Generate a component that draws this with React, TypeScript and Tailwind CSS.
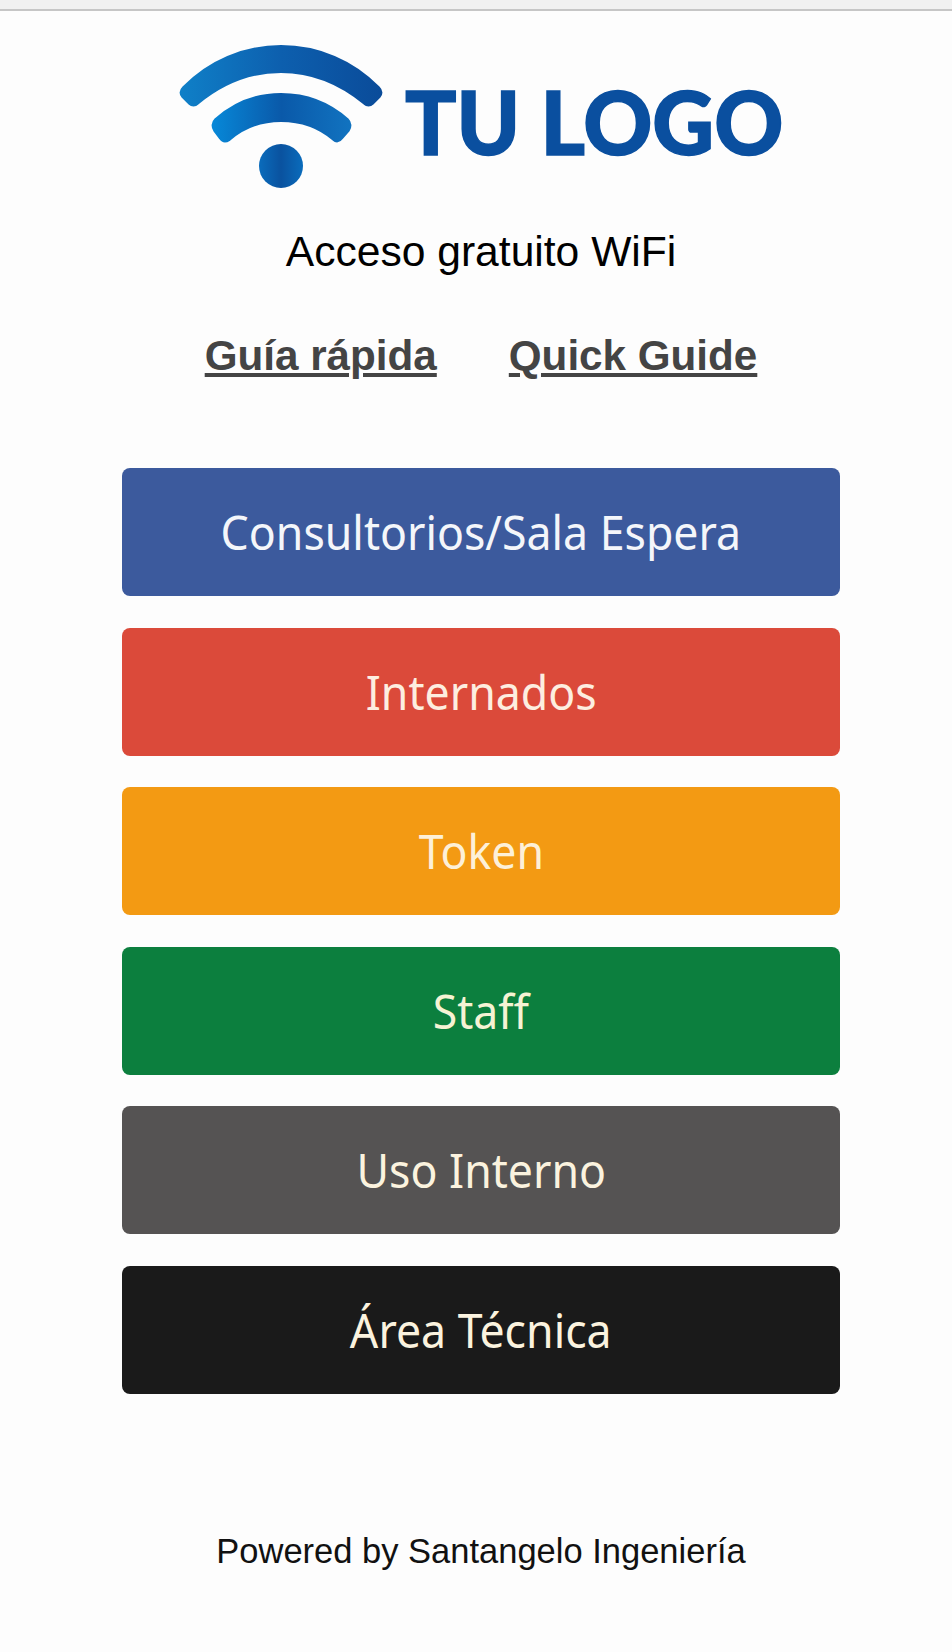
const sans = "font-['Liberation_Sans',Arial,sans-serif]";

const buttons = [
  { label: "Consultorios/Sala Espera", color: "bg-[#3c5a9d] text-[#f4f6fa]" },
  { label: "Internados", color: "bg-[#db4a3a] text-[#fdeee0]" },
  { label: "Token", color: "bg-[#f39a13] text-[#fdf0d8]" },
  { label: "Staff", color: "bg-[#0c7f3e] text-[#f6f3d4]" },
  { label: "Uso Interno", color: "bg-[#555353] text-[#fbf3df]" },
  { label: "Área Técnica", color: "bg-[#1a1a1a] text-[#fbf3df]" },
];

function WifiLogo() {
  return (
    <svg width="206" height="144" viewBox="179 45 206 144" className="shrink-0">
      <defs>
        <linearGradient id="arcTop" x1="179" y1="0" x2="384" y2="0" gradientUnits="userSpaceOnUse">
          <stop offset="0" stopColor="#0f80c8" />
          <stop offset="0.5" stopColor="#0d5fae" />
          <stop offset="1" stopColor="#0a4b99" />
        </linearGradient>
        <linearGradient id="arcMid" x1="212" y1="0" x2="351" y2="0" gradientUnits="userSpaceOnUse">
          <stop offset="0" stopColor="#0788d8" />
          <stop offset="0.5" stopColor="#0a59a9" />
          <stop offset="1" stopColor="#1173c0" />
        </linearGradient>
        <linearGradient id="dot" x1="259" y1="0" x2="303" y2="0" gradientUnits="userSpaceOnUse">
          <stop offset="0" stopColor="#0a6cbc" />
          <stop offset="0.5" stopColor="#0a529f" />
          <stop offset="1" stopColor="#0a6cbc" />
        </linearGradient>
      </defs>
      <path
        d="M184 88 C209 62 244 47 281 47 C318 47 353 62 378 88 C381 91 381 94 379 96 L372 103 C370 105 367 105 365 103 C342 84 313 71 281 71 C249 71 220 84 197 103 C195 105 192 105 190 103 L183 96 C181 94 181 91 184 88 Z"
        fill="url(#arcTop)"
        stroke="url(#arcTop)"
        strokeWidth="4"
        strokeLinejoin="round"
      />
      <path
        d="M216 120 C234 104 256 95 281 95 C306 95 329 104 347 120 C350 123 350 127 348 130 L341 138 C339 141 336 141 334 139 C320 127 302 120 281 120 C260 120 243 127 229 139 C226 141 223 141 221 138 L215 130 C213 127 213 123 216 120 Z"
        fill="url(#arcMid)"
        stroke="url(#arcMid)"
        strokeWidth="4"
        strokeLinejoin="round"
      />
      <circle cx="281" cy="166" r="22" fill="url(#dot)" />
    </svg>
  );
}

export default function App() {
  return (
    <div className={`w-[952px] h-[1652px] bg-[#fdfdfd] overflow-hidden ${sans}`}>
      <div className="h-[11px] bg-[#f1f1f1] border-b-2 border-[#c6c6c6]" />

      {/* Logo */}
      <div className="mt-[34px] ml-[179px] flex items-start">
        <WifiLogo />
        <div className="ml-[20px] mt-[36px] origin-left scale-x-[0.97] font-['Lato',sans-serif] font-black text-[#0a4f9f] text-[88px] leading-[80px] [-webkit-text-stroke:1.5px_#0a4f9f] whitespace-nowrap">
          TU LOGO
        </div>
      </div>

      <div className="ml-[122px] w-[718px]">
        <p className="mt-[38px] text-center text-[42.6px] leading-[48px] text-black">Acceso gratuito WiFi</p>

        <div className="mt-[57px] flex justify-center gap-[72px] text-[42.2px] leading-[48px] font-bold text-[#444444]">
          <a className="underline">Guía rápida</a>
          <a className="underline">Quick Guide</a>
        </div>

        {/* Buttons */}
        <div className="mt-[88px] flex flex-col gap-[31.6px]">
          {buttons.map((b) => (
            <div
              key={b.label}
              className={`h-[128px] rounded-lg flex items-center justify-center font-['Noto_Sans',sans-serif] text-[48px] ${b.color}`}
            >
              <span className="inline-block scale-x-[0.93] whitespace-nowrap">{b.label}</span>
            </div>
          ))}
        </div>

        <p className="mt-[137px] text-center text-[34.5px] leading-[40px] text-[#111111]">
          Powered by Santangelo Ingeniería
        </p>
      </div>
    </div>
  );
}
